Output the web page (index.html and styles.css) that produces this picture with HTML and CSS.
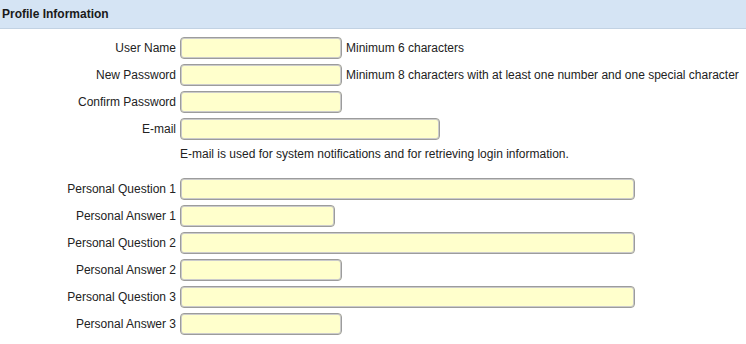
FILE: index.html
```html
<!DOCTYPE html>
<html lang="en">
<head>
    <meta charset="UTF-8">
    <meta name="viewport" content="width=device-width, initial-scale=1.0">
    <title>Profile Information</title>
    <link rel="stylesheet" href="styles.css">
</head>
<body>
    <!-- Section header -->
    <div class="section-header">
        <h1>Profile Information</h1>
    </div>

    <!-- Profile form -->
    <form class="profile-form">
        <label for="user-name">User Name</label>
        <div class="field">
            <input type="text" id="user-name" class="input-short">
            <span class="hint">Minimum 6 characters</span>
        </div>

        <label for="new-password">New Password</label>
        <div class="field">
            <input type="password" id="new-password" class="input-short">
            <span class="hint">Minimum 8 characters with at least one number and one special character</span>
        </div>

        <label for="confirm-password">Confirm Password</label>
        <div class="field">
            <input type="password" id="confirm-password" class="input-short">
        </div>

        <label for="email">E-mail</label>
        <div class="field">
            <input type="text" id="email" class="input-medium">
        </div>

        <div class="note">E-mail is used for system notifications and for retrieving login information.</div>

        <label for="question-1">Personal Question 1</label>
        <div class="field">
            <input type="text" id="question-1" class="input-long">
        </div>

        <label for="answer-1">Personal Answer 1</label>
        <div class="field">
            <input type="text" id="answer-1" class="input-answer">
        </div>

        <label for="question-2">Personal Question 2</label>
        <div class="field">
            <input type="text" id="question-2" class="input-long">
        </div>

        <label for="answer-2">Personal Answer 2</label>
        <div class="field">
            <input type="text" id="answer-2" class="input-short">
        </div>

        <label for="question-3">Personal Question 3</label>
        <div class="field">
            <input type="text" id="question-3" class="input-long">
        </div>

        <label for="answer-3">Personal Answer 3</label>
        <div class="field">
            <input type="text" id="answer-3" class="input-short">
        </div>
    </form>
</body>
</html>
```

FILE: styles.css
```css
/* General Styling */
* {
    margin: 0;
    padding: 0;
    box-sizing: border-box;
}
body {
    font-family: 'Liberation Sans', Arial, sans-serif;
    font-size: 12px;
    color: #222;
    background-color: #fff;
}

/* Section Header */
.section-header {
    height: 29px;
    background-color: #d5e4f4;
    border-bottom: 1px solid #c2d2e3;
    padding: 0 2px;
    display: flex;
    align-items: center;
}
.section-header h1 {
    font-size: 12px;
    font-weight: bold;
    color: #1a1a1a;
}

/* Form Layout */
.profile-form {
    display: grid;
    grid-template-columns: 176px 1fr;
    column-gap: 4px;
    row-gap: 5px;
    padding-top: 8px;
}
.profile-form label {
    text-align: right;
    align-self: center;
}
.field {
    display: flex;
    align-items: center;
    gap: 4px;
}
.field input {
    height: 22px;
    border: 1px solid #9c9c9c;
    border-radius: 4px;
    box-shadow: inset 0 0 0 1px #cbcbcb;
    background-color: #ffffcc;
    font-family: inherit;
    font-size: 12px;
    padding: 0 4px;
}
.input-short {
    width: 162px;
}
.input-answer {
    width: 155px;
}
.input-medium {
    width: 260px;
}
.input-long {
    width: 455px;
}
.hint {
    white-space: nowrap;
}

/* Note under e-mail */
.note {
    grid-column: 2;
    line-height: 18px;
    height: 28px;
}
```
